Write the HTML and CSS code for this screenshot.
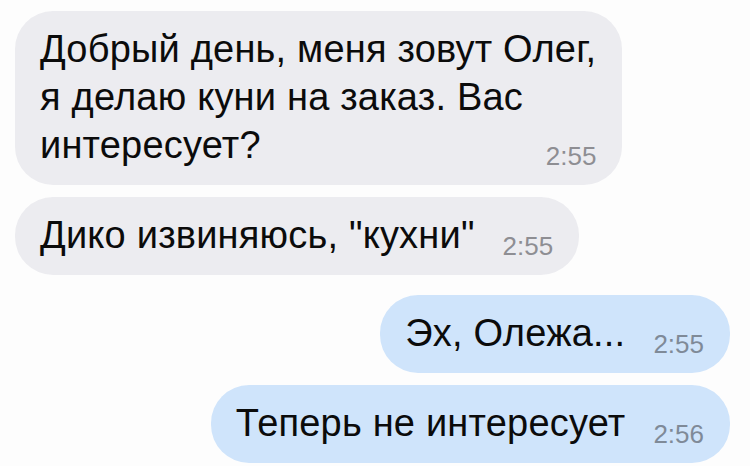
FILE: index.html
```html
<!DOCTYPE html>
<html lang="ru">
<head>
  <meta charset="UTF-8" />
  <meta name="viewport" content="width=device-width, initial-scale=1.0"/>
  <title>Олег</title>
  <link rel="stylesheet" href="styles.css">
</head>
<body>
  <div class="chat">
    <!-- входящие -->
    <div class="bubble in">
      <div class="text">Добрый день, меня зовут Олег,<br/>я делаю куни на заказ. Вас</div>
      <div class="last">
        <span>интересует?</span>
        <span class="time">2:55</span>
      </div>
    </div>

    <div class="bubble in">
      <div class="last">
        <span>Дико извиняюсь, "кухни"</span>
        <span class="time">2:55</span>
      </div>
    </div>

    <!-- исходящие -->
    <div class="bubble out first">
      <div class="last">
        <span>Эх, Олежа...</span>
        <span class="time">2:55</span>
      </div>
    </div>

    <div class="bubble out">
      <div class="last">
        <span>Теперь не интересует</span>
        <span class="time">2:56</span>
      </div>
    </div>
  </div>
</body>
</html>
```

FILE: styles.css
```css
body {
  margin: 0;
  background: #fdfdfd;
  color: #0b0b0b;
  font-family: "Liberation Sans", Arial, sans-serif;
}

/* лента */
.chat {
  display: flex;
  flex-direction: column;
  gap: 12px;
  padding: 11px 20px 0 15px;
}

/* пузырь */
.bubble {
  font-size: 38px;
  line-height: 48px;
  letter-spacing: 0.2px;
  padding: 14px 26px 16px 25px;
  border-radius: 38px;
}
.bubble.in {
  align-self: flex-start;
  background: #ececf0;
}
.bubble.out {
  align-self: flex-end;
  background: #cfe4fb;
}
.bubble.out.first {
  margin-top: 8px;
}

/* последняя строка + время */
.last {
  display: flex;
  justify-content: space-between;
  align-items: flex-end;
  gap: 28px;
}
.time {
  font-size: 26px;
  line-height: 26px;
  letter-spacing: 0;
  color: #8e8e93;
}
.out .time {
  color: #7f8a98;
}
```
